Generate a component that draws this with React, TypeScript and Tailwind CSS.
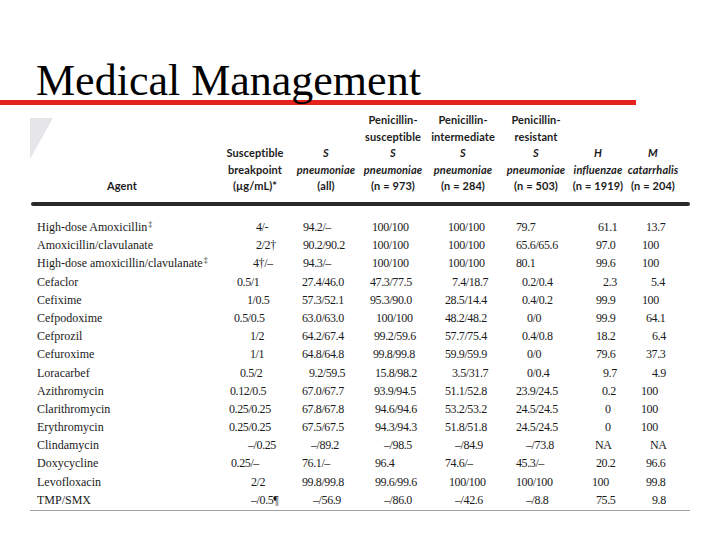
import React from "react";

type Cell = [string, number];
type Row = { agent: string; sup?: string; cells: Cell[] };

const colStarts = [225, 300, 366, 440, 512, 590, 638];
const colWidths = [75, 66, 74, 72, 78, 48, 62];

const rows: Row[] = [
  { agent: "High-dose Amoxicillin", sup: "‡", cells: [["4/-", 256], ["94.2/–", 303], ["100/100", 372], ["100/100", 448], ["79.7", 516], ["61.1", 598], ["13.7", 646]] },
  { agent: "Amoxicillin/clavulanate", cells: [["2/2†", 256], ["90.2/90.2", 303], ["100/100", 372], ["100/100", 448], ["65.6/65.6", 516], ["97.0", 596], ["100", 642]] },
  { agent: "High-dose amoxicillin/clavulanate", sup: "‡", cells: [["4†/–", 253], ["94.3/–", 303], ["100/100", 372], ["100/100", 448], ["80.1", 516], ["99.6", 596], ["100", 642]] },
  { agent: "Cefaclor", cells: [["0.5/1", 237], ["27.4/46.0", 302], ["47.3/77.5", 370], ["7.4/18.7", 452], ["0.2/0.4", 522], ["2.3", 603], ["5.4", 651]] },
  { agent: "Cefixime", cells: [["1/0.5", 247], ["57.3/52.1", 302], ["95.3/90.0", 370], ["28.5/14.4", 445], ["0.4/0.2", 522], ["99.9", 596], ["100", 642]] },
  { agent: "Cefpodoxime", cells: [["0.5/0.5", 234], ["63.0/63.0", 302], ["100/100", 376], ["48.2/48.2", 445], ["0/0", 527], ["99.9", 596], ["64.1", 646]] },
  { agent: "Cefprozil", cells: [["1/2", 250], ["64.2/67.4", 302], ["99.2/59.6", 374], ["57.7/75.4", 445], ["0.4/0.8", 522], ["18.2", 596], ["6.4", 652]] },
  { agent: "Cefuroxime", cells: [["1/1", 250], ["64.8/64.8", 302], ["99.8/99.8", 373], ["59.9/59.9", 445], ["0/0", 527], ["79.6", 596], ["37.3", 646]] },
  { agent: "Loracarbef", cells: [["0.5/2", 240], ["9.2/59.5", 309], ["15.8/98.2", 375], ["3.5/31.7", 452], ["0/0.4", 527], ["9.7", 603], ["4.9", 652]] },
  { agent: "Azithromycin", cells: [["0.12/0.5", 230], ["67.0/67.7", 302], ["93.9/94.5", 374], ["51.1/52.8", 445], ["23.9/24.5", 516], ["0.2", 602], ["100", 641]] },
  { agent: "Clarithromycin", cells: [["0.25/0.25", 229], ["67.8/67.8", 302], ["94.6/94.6", 375], ["53.2/53.2", 445], ["24.5/24.5", 516], ["0", 605], ["100", 641]] },
  { agent: "Erythromycin", cells: [["0.25/0.25", 229], ["67.5/67.5", 302], ["94.3/94.3", 375], ["51.8/51.8", 445], ["24.5/24.5", 516], ["0", 605], ["100", 641]] },
  { agent: "Clindamycin", cells: [["–/0.25", 248], ["–/89.2", 311], ["–/98.5", 384], ["–/84.9", 455], ["–/73.8", 526], ["NA", 595], ["NA", 650]] },
  { agent: "Doxycycline", cells: [["0.25/–", 231], ["76.1/–", 302], ["96.4", 375], ["74.6/–", 445], ["45.3/–", 516], ["20.2", 596], ["96.6", 646]] },
  { agent: "Levofloxacin", cells: [["2/2", 251], ["99.8/99.8", 302], ["99.6/99.6", 375], ["100/100", 449], ["100/100", 516], ["100", 592], ["99.8", 646]] },
  { agent: "TMP/SMX", cells: [["–/0.5¶", 251], ["–/56.9", 313], ["–/86.0", 384], ["–/42.6", 455], ["–/8.8", 526], ["75.5", 596], ["9.8", 652]] },
];

type HeadLine = { t: string; i?: boolean };
const headers: { w: string; lines: HeadLine[] }[] = [
  { w: "w-[164px]", lines: [{ t: "Agent" }] },
  { w: "w-[102px]", lines: [{ t: "Susceptible" }, { t: "breakpoint" }, { t: "(µg/mL)*" }] },
  { w: "w-[40px]", lines: [{ t: "S", i: true }, { t: "pneumoniae", i: true }, { t: "(all)" }] },
  { w: "w-[94px]", lines: [{ t: "Penicillin-" }, { t: "susceptible" }, { t: "S", i: true }, { t: "pneumoniae", i: true }, { t: "(n = 973)" }] },
  { w: "w-[46px]", lines: [{ t: "Penicillin-" }, { t: "intermediate" }, { t: "S", i: true }, { t: "pneumoniae", i: true }, { t: "(n = 284)" }] },
  { w: "w-[100px]", lines: [{ t: "Penicillin-" }, { t: "resistant" }, { t: "S", i: true }, { t: "pneumoniae", i: true }, { t: "(n = 503)" }] },
  { w: "w-[24px]", lines: [{ t: "H", i: true }, { t: "influenzae", i: true }, { t: "(n = 1919)" }] },
  { w: "w-[86px]", lines: [{ t: "M", i: true }, { t: "catarrhalis", i: true }, { t: "(n = 204)" }] },
];

export default function App() {
  return (
    <div className="relative w-[720px] h-[540px] bg-white overflow-hidden">
      <h1 className="pl-[36px] pt-[62px] text-[44px] leading-[38px] text-black font-['Liberation_Serif',serif] whitespace-nowrap">
        Medical Management
      </h1>
      <div className="h-[5px] w-[636px] bg-[#e3231c]" />

      <svg className="absolute left-0 top-0" width="720" height="540" aria-hidden="true">
        <polygon points="30,118 53,118 30,159" fill="#e6e6ea" />
      </svg>

      <div className="relative mt-[6px] flex pl-[40px] h-[84px] text-[#1c1c1c] font-['Lato',sans-serif] font-bold text-[11px] tracking-[0.1px] leading-[16.6px]">
        {headers.map((h, i) => (
          <div key={i} className={`${h.w} shrink-0 flex flex-col items-center justify-end`}>
            {h.lines.map((l, j) => (
              <div key={j} className={`whitespace-nowrap ${l.i ? "italic" : ""}`}>
                {l.t}
              </div>
            ))}
          </div>
        ))}
      </div>

      <div className="relative mt-[7px] ml-[31px] w-[659px] h-[4px] rounded-[2px] bg-[#2a2a2a]" />

      <div className="relative mt-[12px] ml-[37px] text-[12px] leading-[18.2px] text-[#1a1a1a] font-['Liberation_Serif',serif]">
        {rows.map((r, ri) => (
          <div key={ri} className="flex h-[18.2px] whitespace-nowrap">
            <div className="w-[188px] shrink-0">
              {r.agent}
              {r.sup && <sup className="text-[8px] ml-[1px]">{r.sup}</sup>}
            </div>
            {r.cells.map(([t, x], ci) => (
              <div
                key={ci}
                className="shrink-0 tracking-[-0.4px]"
                style={{ width: colWidths[ci], paddingLeft: x - colStarts[ci] }}
              >
                {t}
              </div>
            ))}
          </div>
        ))}
      </div>

      <div className="relative mt-[1px] ml-[30px] w-[660px] h-[1px] bg-[#a0a0a0]" />
    </div>
  );
}
